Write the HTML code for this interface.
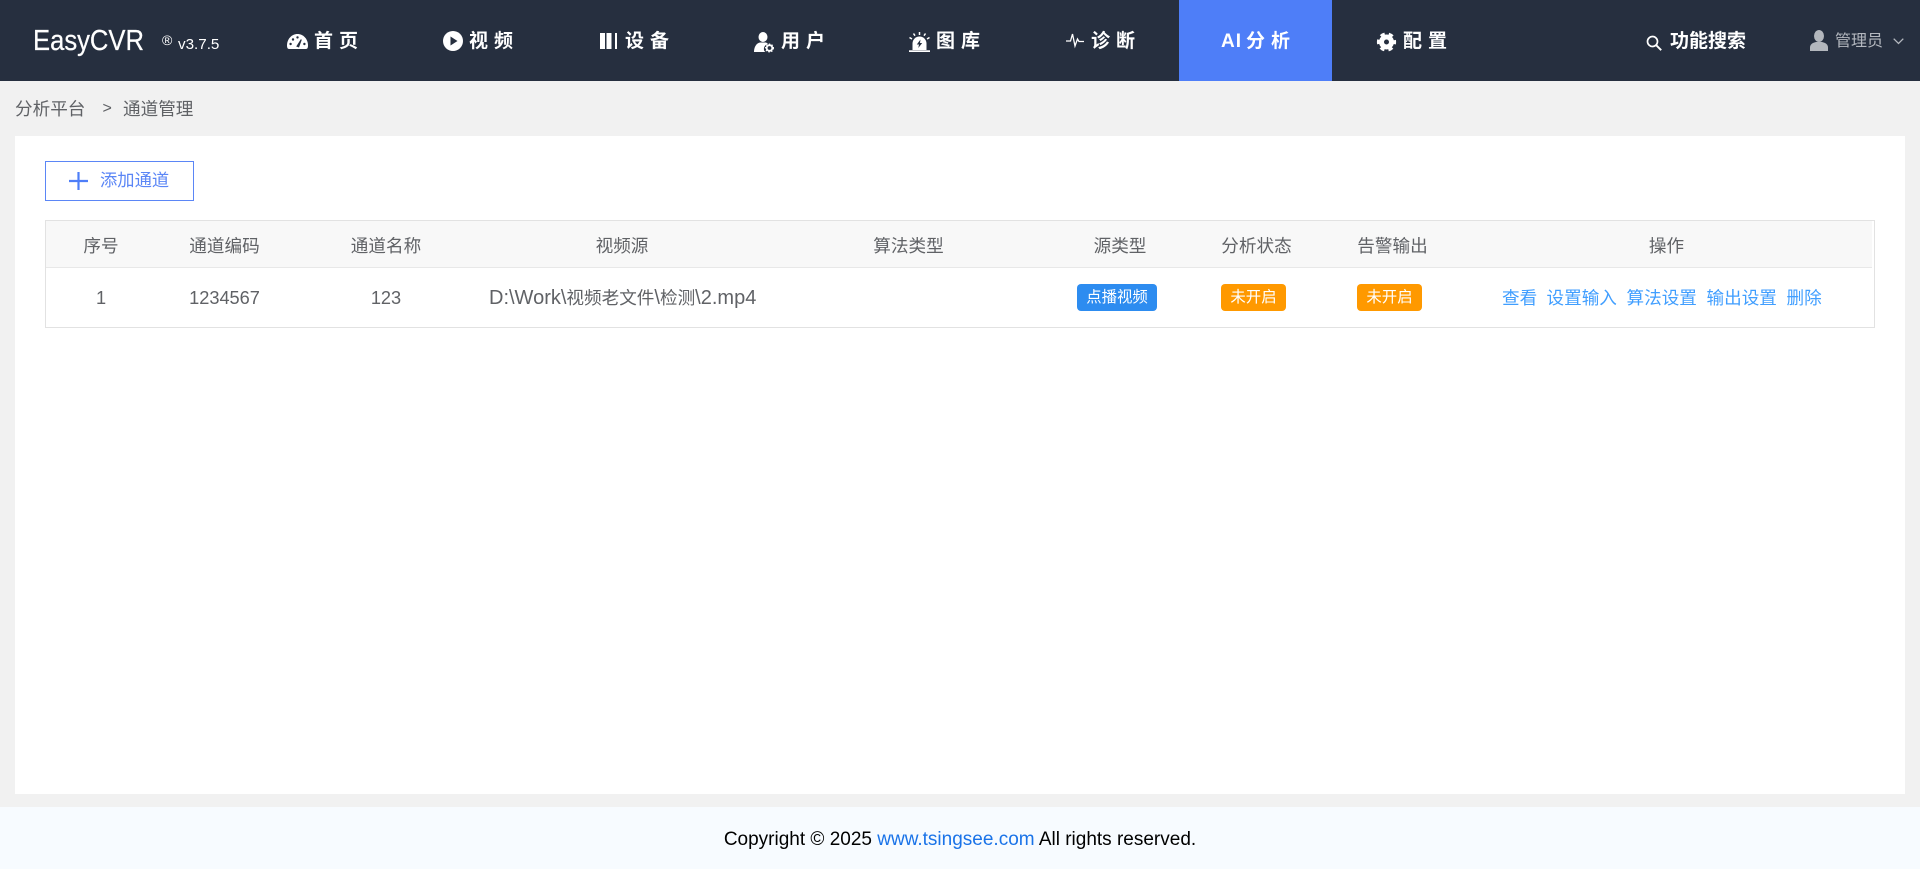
<!DOCTYPE html>
<html lang="zh-CN">
<head>
<meta charset="utf-8">
<title>EasyCVR</title>
<style>
html,body{margin:0;padding:0;width:1920px;height:869px;overflow:hidden;background:#f1f1f1;}
body{position:relative;font-family:"Liberation Sans","Noto Sans CJK SC",sans-serif;color:#606266;}
.a{position:absolute;white-space:nowrap;line-height:24px;}
.c{transform:translateX(-50%);}
#hd{position:absolute;left:0;top:0;width:1920px;height:81px;background:#262f3f;}
#act{position:absolute;left:1179px;top:0;width:153px;height:81px;background:#4e7ef8;}
.n{position:absolute;top:29px;white-space:nowrap;line-height:26px;color:#fff;font-size:19px;font-weight:700;letter-spacing:6px;}
svg{position:absolute;display:block;overflow:visible;}
#card{position:absolute;left:15px;top:136px;width:1890px;height:658px;background:#fff;}
#btn{position:absolute;left:45px;top:161px;width:147px;height:38px;border:1px solid #5b86f6;background:#fff;}
#tb{position:absolute;left:45px;top:220px;width:1828px;height:106px;border:1px solid #e2e2e2;background:#fff;}
#th{position:absolute;left:0;top:0;width:1826px;height:46px;background:#f8f8f8;border-bottom:1px solid #e8e8e8;}
.t{font-size:17.6px;color:#606266;}
.d{font-size:18.2px;}
.p{font-size:20px;}
.tag{position:absolute;top:284px;height:27px;line-height:28px;border-radius:4px;color:#fff;font-size:15.4px;text-align:center;white-space:nowrap;}
.l{font-size:17.6px;color:#409eff;}
#ft{position:absolute;left:0;top:807px;width:1920px;height:62px;background:#f7fbff;}
</style>
</head>
<body>
<div id="hd"></div>
<div id="act"></div>

<div class="a" style="left:33px;top:24px;font-size:29px;line-height:34px;color:#fff;transform:scaleX(.883);transform-origin:left center;-webkit-text-stroke:.25px #fff;">EasyCVR</div>
<div class="a" style="left:162px;top:32px;font-size:14px;line-height:16px;color:#fff;">®</div>
<div class="a" style="left:178px;top:33px;font-size:15.2px;color:#fff;">v3.7.5</div>

<!-- gauge -->
<svg style="left:287px;top:34px" width="21" height="15" viewBox="0 0 21 15">
<path fill="#fff" d="M2 15C.6 15 0 13.6 0 11.5 0 5 4.700 0 10.500 0S21 5 21 11.500C21 13.600 20.400 15 19 15Z"/>
<g fill="#262f3f"><circle cx="3.600" cy="10" r="1.200"/><circle cx="6" cy="5.500" r="1.200"/><circle cx="10.500" cy="3.400" r="1.200"/><circle cx="17.400" cy="10" r="1.200"/><path d="M9.200 12.500 13.800 5.200 14.800 5.800 12 13.500Z"/></g>
</svg>
<div class="n" style="left:314px;">首页</div>

<!-- play -->
<svg style="left:443px;top:31px" width="20" height="20" viewBox="0 0 20 20">
<circle cx="10" cy="10" r="10" fill="#fff"/><path d="M7.500 5.500 14.500 10 7.500 14.500Z" fill="#262f3f"/>
</svg>
<div class="n" style="left:469px;">视频</div>

<!-- device -->
<svg style="left:600px;top:33px" width="17" height="16" viewBox="0 0 17 16">
<rect x="0" y="0" width="5" height="16" fill="#fff"/><rect x="6.500" y="0" width="5" height="16" fill="#fff"/><rect x="15" y="0" width="2" height="16" fill="#fff"/>
</svg>
<div class="n" style="left:625px;">设备</div>

<!-- user gear -->
<svg style="left:754px;top:32px" width="20" height="20" viewBox="0 0 20 20">
<ellipse cx="9" cy="5" rx="4.500" ry="5" fill="#fff"/>
<path fill="#fff" d="M0 20C0 15 2.500 11 6 10.500H12C13 11 13.500 11.500 14 12 11 12.500 9.500 15.500 10 18 10 19 11 19.500 11.500 20Z"/>
<circle cx="15.500" cy="16" r="2.800" fill="none" stroke="#fff" stroke-width="1.800"/>
<circle cx="15.500" cy="16" r="4" fill="none" stroke="#fff" stroke-width="1" stroke-dasharray="1.500 1.500"/>
</svg>
<div class="n" style="left:781px;">用户</div>

<!-- alarm -->
<svg style="left:909px;top:32px" width="21" height="20" viewBox="0 0 21 20">
<path fill="#fff" d="M3.500 18V11.500C3.500 7.600 6.700 4.500 10.500 4.500S17.500 7.600 17.500 11.500V18Z"/>
<rect x="0" y="18.300" width="21" height="1.700" fill="#fff"/>
<path fill="#262f3f" d="M11.500 7.500 7.800 12.500H10L9.300 16 13.200 11H11Z"/>
<g stroke="#fff" stroke-width="1.500" fill="none"><path d="M10.500 0V3"/><path d="M4.500 1.500 6 3.700"/><path d="M16.500 1.500 15 3.700"/><path d="M.5 5.500 3 7"/><path d="M20.500 5.500 18 7"/></g>
</svg>
<div class="n" style="left:936px;">图库</div>

<!-- pulse -->
<svg style="left:1066px;top:33px" width="18" height="14" viewBox="0 0 18 14">
<path d="M0 8H4.500L6.500 1 9 13 11.500 6 13 8.500H18" fill="none" stroke="#fff" stroke-width="1.300"/>
</svg>
<div class="n" style="left:1091px;">诊断</div>

<div class="n" style="left:1221px;letter-spacing:1px;">AI</div>
<div class="n" style="left:1246px;letter-spacing:6px;">分析</div>

<!-- gear -->
<svg style="left:1377px;top:32px" width="19" height="20" viewBox="0 0 19 20">
<circle cx="9.500" cy="10" r="5" fill="none" stroke="#fff" stroke-width="5"/>
<circle cx="9.500" cy="10" r="8.300" fill="none" stroke="#fff" stroke-width="2.600" stroke-dasharray="4.500 4.190" stroke-dashoffset="2.250"/>
</svg>
<div class="n" style="left:1403px;">配置</div>

<!-- search -->
<svg style="left:1646px;top:35px" width="16" height="16" viewBox="0 0 16 16">
<circle cx="6.500" cy="6.500" r="5" fill="none" stroke="#fff" stroke-width="1.700"/><path d="M10.200 10.200 15.200 15.200" stroke="#fff" stroke-width="1.900"/>
</svg>
<div class="n" style="left:1670px;letter-spacing:0;">功能搜索</div>

<!-- gray user -->
<svg style="left:1810px;top:30px" width="18" height="21" viewBox="0 0 18 21">
<ellipse cx="9" cy="6" rx="5" ry="6" fill="#b3b7bd"/>
<path fill="#b3b7bd" d="M0 21V17.500C0 14.500 2.500 12.800 6 12H12C15.500 12.800 18 14.500 18 17.500V21Z"/>
</svg>
<div class="a" style="left:1835px;top:30px;font-size:16px;color:#b4b8bf;">管理员</div>
<svg style="left:1893px;top:38px" width="11" height="7" viewBox="0 0 11 7">
<path d="M.7.700 5.500 5.500 10.300.700" fill="none" stroke="#b4b8bf" stroke-width="1.300"/>
</svg>

<div class="a t" style="left:15px;top:97px;">分析平台</div>
<div class="a t" style="left:102.500px;top:97px;font-size:16px;">&gt;</div>
<div class="a t" style="left:123px;top:97px;">通道管理</div>

<div id="card"></div>
<div id="btn"></div>
<svg style="left:69px;top:172px" width="19" height="18" viewBox="0 0 19 18">
<path d="M9.500 0V18M0 9H19" stroke="#4e7ef8" stroke-width="2.200" fill="none"/>
</svg>
<div class="a" style="left:100px;top:168px;font-size:17.3px;color:#5b86f6;">添加通道</div>

<div id="tb"><div id="th"></div></div>

<div class="a t c" style="left:101px;top:234px;">序号</div>
<div class="a t c" style="left:224.500px;top:234px;">通道编码</div>
<div class="a t c" style="left:386px;top:234px;">通道名称</div>
<div class="a t c" style="left:622px;top:234px;">视频源</div>
<div class="a t c" style="left:908.500px;top:234px;">算法类型</div>
<div class="a t c" style="left:1120px;top:234px;">源类型</div>
<div class="a t c" style="left:1256.500px;top:234px;">分析状态</div>
<div class="a t c" style="left:1392.500px;top:234px;">告警输出</div>
<div class="a t c" style="left:1666.500px;top:234px;">操作</div>

<div class="a t c d" style="left:101px;top:286px;">1</div>
<div class="a t c d" style="left:224.500px;top:286px;">1234567</div>
<div class="a t c d" style="left:386px;top:286px;">123</div>
<div class="a t" style="left:489px;top:286px;"><span class="p">D:\Work\</span>视频老文件<span class="p">\</span>检测<span class="p">\2.mp4</span></div>

<div class="tag" style="left:1077px;width:80px;background:#2d8cf0;">点播视频</div>
<div class="tag" style="left:1221px;width:65px;background:#ff9900;">未开启</div>
<div class="tag" style="left:1357px;width:65px;background:#ff9900;">未开启</div>

<div class="a l" style="left:1502px;top:286px;">查看</div>
<div class="a l" style="left:1546.500px;top:286px;">设置输入</div>
<div class="a l" style="left:1626.500px;top:286px;">算法设置</div>
<div class="a l" style="left:1706.500px;top:286px;">输出设置</div>
<div class="a l" style="left:1786.500px;top:286px;">删除</div>

<div id="ft"></div>
<div class="a c" style="left:960px;top:828px;font-size:19px;color:#000;">Copyright © 2025 <span style="color:#1a73e8">www.tsingsee.com</span> All rights reserved.</div>
</body>
</html>
